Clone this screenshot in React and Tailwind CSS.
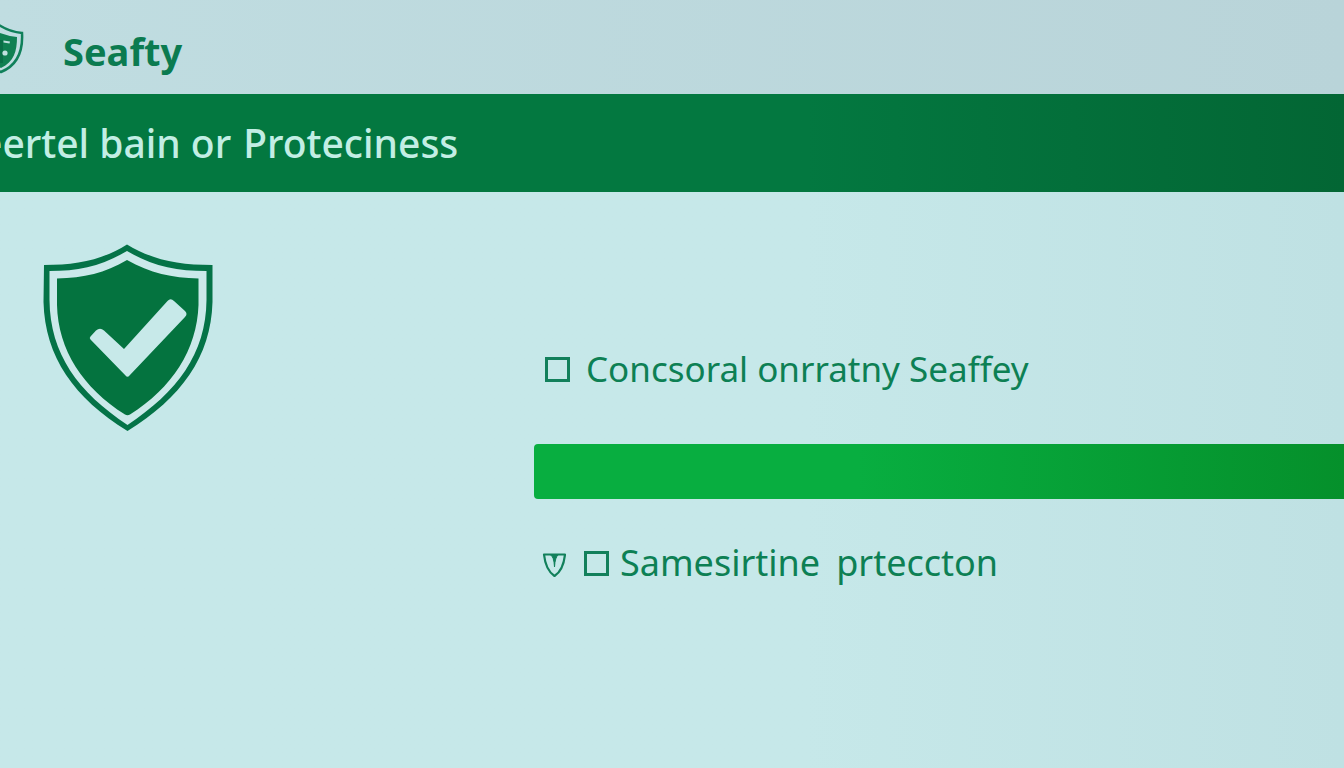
function BrandShield() {
  return (
    <svg viewBox="0 0 44 50" className="-ml-5 h-[50px] w-11 shrink-0" aria-hidden="true">
      <path
        d="M19 1 Q30 8 42 9 C43 26 38 41 21 48 C4 41 -1 26 0 9 Q10 8 19 1Z"
        fill="none"
        stroke="#10805a"
        strokeWidth="2.500"
      />
      <path d="M20 9 Q28 12 37 13 C37 27 34 38 21 44 C8 38 5 27 5 13 Q14 12 20 9Z" fill="#108052" />
      <path d="M20 16 H23 V39 H20Z" fill="#0a6f47" />
      <path d="M23.500 16.500 L30 17.500 L29.500 19.500 L23.500 18.500Z" fill="#bfe0df" />
      <circle cx="25" cy="29" r="2.600" fill="#bfe0df" />
    </svg>
  );
}

function CheckShield() {
  return (
    <svg viewBox="0 0 200 210" className="h-[210px] w-[200px] shrink-0" role="img" aria-label="Protected">
      <path
        d="M97 14.500 C123 30 148 35 182.500 35 V72 C181 127 151 168 97.500 201 C44 168 15 127 13.500 72 L14 35 C47 35 72 30 97 14.500Z"
        fill="#047347"
      />
      <path
        d="M97 21 C122 36 146 41 176.500 41 V70 C176 124 147 162 97.500 195 C48 162 20 124 19.500 70 V41 C49 41 72 36 97 21Z"
        fill="#cbe9ea"
      />
      <path
        d="M97 30 C120 43 142 48 168.500 48.500 V75 C167 120 142 158 100 184.500 Q97.500 186 95 184.500 C53 158 28 120 27 75 V48.500 C54 48 75 43 97 30Z"
        fill="#04733f"
      />
      <path
        d="M60.500 109.500 Q59 108 60.500 106.500 L66 100.500 Q70 97 74 100.500 L94 119 L137.500 71 Q140.500 67.500 144 71 L155 81 Q158 84 155 87 L99.500 145.500 Q97.500 148 95.500 145.500Z"
        fill="#c7e9e9"
      />
    </svg>
  );
}

function MiniShield() {
  return (
    <svg viewBox="0 0 24 26" className="mt-1 h-[26px] w-6 shrink-0" aria-hidden="true">
      <path
        d="M2 2.500 H23 C22 12 18.500 20 12.500 24 C6.500 20 3 12 2 2.500Z"
        fill="none"
        stroke="#12805b"
        strokeWidth="2.200"
        strokeLinejoin="round"
      />
      <path d="M8 2.500 Q12 4 12.500 15 Q13 5 16.500 2.500Z" fill="#12805b" stroke="#12805b" strokeWidth="1" />
    </svg>
  );
}

function Option({ id, icon, children }) {
  return (
    <div className="flex items-center">
      {icon}
      <input
        id={id}
        type="checkbox"
        className="size-[25px] shrink-0 appearance-none border-[3px] border-[#12805b] checked:bg-[#12805b]"
      />
      <label htmlFor={id} className="flex leading-[48px] whitespace-nowrap text-[#0d8054]">
        {children}
      </label>
    </div>
  );
}

export default function App() {
  return (
    <div className="flex min-h-screen flex-col overflow-x-hidden bg-linear-to-r from-[#c6e8e9] from-60% to-[#bfe1e3] font-['Noto_Sans',sans-serif]">
      <header className="flex items-center gap-[39px] bg-linear-to-r from-[#c0dde1] to-[#b9d4d9] pt-6 pb-5">
        <BrandShield />
        <span className="pt-1 text-[38px] leading-[44px] font-bold text-[#0b7b50]">Seafty</span>
      </header>
      <div className="overflow-hidden bg-linear-to-r from-[#037840] from-60% to-[#036634] py-[22px]">
        <h1 className="-ml-5 flex gap-3 text-[39px] leading-[54px] font-medium whitespace-nowrap text-[#c2eee4]">
          <span>eertel bain or</span>
          <span>Proteciness</span>
        </h1>
      </div>
      <main className="flex items-start pt-[38px]">
        <div className="w-[534px] shrink-0 pl-[30px]">
          <CheckShield />
        </div>
        <form className="flex min-w-0 grow flex-col pt-[115px]">
          <div className="pl-[11px] text-[35px] [&_label]:ml-4">
            <Option id="seaffey">Concsoral onrratny Seaffey</Option>
          </div>
          <button
            type="button"
            aria-label="Continue"
            className="mt-[51px] h-[55px] w-full rounded-l bg-linear-to-r from-[#08ae40] from-40% to-[#05902b]"
          />
          <div className="mt-10 pl-2 text-[36px] [&_input]:ml-[18px] [&_label]:ml-[11px]">
            <Option id="prteccton" icon={<MiniShield />}>
              <span className="mr-4">Samesirtine</span> <span>prteccton</span>
            </Option>
          </div>
        </form>
      </main>
    </div>
  );
}
